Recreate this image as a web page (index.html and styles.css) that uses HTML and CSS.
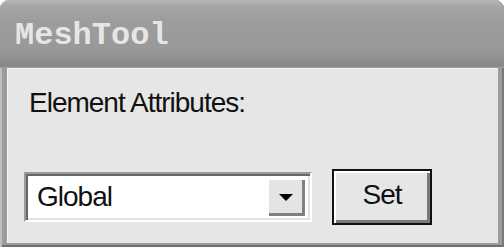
FILE: index.html
```html
<!DOCTYPE html>
<html lang="en">
  <head>
    <meta charset="utf-8" />
    <title>MeshTool</title>
    <link rel="stylesheet" href="styles.css">
  </head>
  <body>
    <div class="window">
      <div class="titlebar">MeshTool</div>
      <div class="client">
        <div class="label">Element Attributes:</div>
        <div class="row">
          <div class="combo">
            <span class="combo-text">Global</span>
            <span class="combo-btn">
              <svg width="14" height="7" viewBox="0 0 14 7"><polygon points="0,0 14,0 7,7" fill="#000"/></svg>
            </span>
          </div>
          <div class="set-btn">Set</div>
        </div>
      </div>
    </div>
  </body>
</html>
```

FILE: styles.css
```css
html,
body {
  margin: 0;
  padding: 0;
  background: #fff;
  overflow: hidden;
}
.window {
  width: 504px;
  height: 247px;
  display: flex;
  flex-direction: column;
  background: #9c9c9c;
  border-radius: 9px 9px 0 0;
  box-shadow: inset 2px 0 0 #bdbdbd, inset -2px 0 0 #7a7a7a, inset 0 -2px 0 #6f6f6f;
  overflow: hidden;
}
.titlebar {
  flex: none;
  height: 68px;
  box-sizing: border-box;
  padding: 18px 0 0 15px;
  line-height: 36px;
  font-family: 'Liberation Mono', monospace;
  font-weight: bold;
  font-size: 32px;
  color: #e6e6e6;
  background: linear-gradient(to bottom, #b6b6b6 0, #a6a6a6 6px, #9d9d9d 20px, #999 48px, #8f8f8f 60px, #878787 66px, #a2a2a2 68px);
}
.client {
  flex: 1;
  margin: 0 6px 4px 7px;
  padding: 19px 0 0 17px;
  background: #e6e6e6;
  box-shadow: inset 1px 1px 0 #f4f4f4;
  font-family: 'Liberation Sans', Arial, sans-serif;
  font-size: 28px;
  letter-spacing: -1px;
  color: #111;
}
.label {
  margin-left: 5px;
  line-height: 32px;
}
.row {
  display: flex;
  align-items: center;
  gap: 20px;
  margin-top: 50px;
}
.combo {
  width: 288px;
  height: 50px;
  box-sizing: border-box;
  display: flex;
  align-items: center;
  padding: 0 5px 0 11px;
  background: #fff;
  border: 2px solid;
  border-color: #9a9a9a #fff #fff #9a9a9a;
  box-shadow: inset 2px 2px 0 #666, inset -2px -2px 0 #e2e2e2;
}
.combo-text {
  flex: 1;
}
.combo-btn {
  width: 38px;
  height: 38px;
  box-sizing: border-box;
  display: flex;
  align-items: center;
  justify-content: center;
  background: #e4e4e4;
  box-shadow: inset 2px 2px 0 #fff, inset -3px -3px 0 #808080;
}
.set-btn {
  width: 100px;
  height: 56px;
  box-sizing: border-box;
  display: flex;
  align-items: center;
  justify-content: center;
  padding-bottom: 4px;
  border: 2px solid #111;
  background: #e6e6e6;
  box-shadow: inset 2px 2px 0 #fff, inset -3px -3px 0 #7a7a7a;
}
```
